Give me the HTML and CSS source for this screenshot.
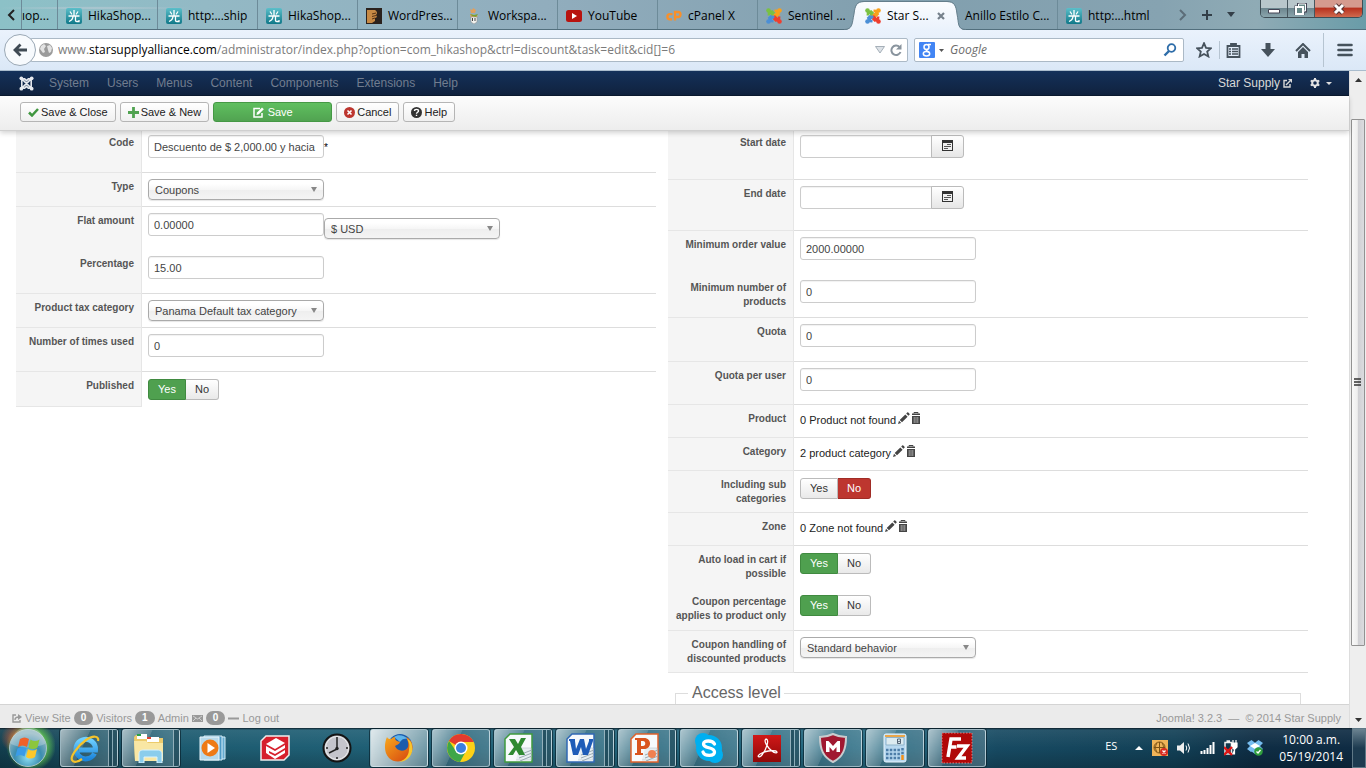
FILE: index.html
```html
<!DOCTYPE html>
<html lang="en">
<head>
<meta charset="utf-8">
<title>Star Supply - Discount</title>
<link rel="stylesheet" href="styles.css">
</head>
<body>
<svg class="defs" aria-hidden="true">
  <defs>
    <linearGradient id="teal" x1="0" y1="0" x2="0" y2="1"><stop offset="0" stop-color="#5cbfca"/><stop offset="1" stop-color="#0f7888"/></linearGradient>
    <linearGradient id="tabfill" x1="0" y1="0" x2="0" y2="1"><stop offset="0" stop-color="#fafcff"/><stop offset="1" stop-color="#eaf2fc"/></linearGradient>
    <radialGradient id="orb" cx=".5" cy=".75" r=".65"><stop offset="0" stop-color="#8fe0f4"/><stop offset=".55" stop-color="#3b8db0"/><stop offset="1" stop-color="#8eb4c0"/></radialGradient>
    <radialGradient id="glow"><stop offset=".5" stop-color="#6fe050" stop-opacity=".9"/><stop offset="1" stop-color="#6fe050" stop-opacity="0"/></radialGradient>
    <radialGradient id="glowr"><stop offset=".2" stop-color="#f06030" stop-opacity=".6"/><stop offset="1" stop-color="#f06030" stop-opacity="0"/></radialGradient>
    <linearGradient id="red" x1="0" y1="0" x2="0" y2="1"><stop offset="0" stop-color="#d01818"/><stop offset="1" stop-color="#900808"/></linearGradient>
    <linearGradient id="fox" x1="0" y1="0" x2="1" y2="1"><stop offset="0" stop-color="#f7a81c"/><stop offset="1" stop-color="#d4400f"/></linearGradient>
    <linearGradient id="ie" x1="0" y1="0" x2="0" y2="1"><stop offset="0" stop-color="#6fd0ff"/><stop offset="1" stop-color="#1c86dc"/></linearGradient>
  </defs>
  <symbol id="hika" viewBox="0 0 16 16"><rect width="16" height="16" rx="2" fill="url(#teal)"/><path d="M8 2v6M4 3.500l2 3M12 3.500l-2 3M2.500 8h11M7 8c0 3-1.500 4.500-4 5.500M9.500 8v4.500c0 .7.500 1 1.200 1h2.300v-1.500" fill="none" stroke="#fff" stroke-width="1.300"/></symbol>
  <symbol id="joomla" viewBox="0 0 16 16"><g fill="none" stroke-width="2.500"><path d="M2.800 7.500L3 5l3-1.500L8.500 6" stroke="#7ac143"/><path d="M8.500 2.800l2.500.2 1.700 3L10 8.500" stroke="#f9a01b"/><path d="M13.200 8.500L13 11l-3 1.500L7.500 10" stroke="#ef3e2e"/><path d="M7.500 13.200L5 13l-1.700-3L6 7.500" stroke="#4b8fd6"/><path d="M2.500 2.500L9 9" stroke="#7ac143"/><path d="M13.500 2.500L7 9" stroke="#f9a01b"/><path d="M13.500 13.500L8 8" stroke="#ef3e2e"/><path d="M2.500 13.500L8 8" stroke="#4b8fd6"/></g><circle cx="2.500" cy="2.500" r="2.300" fill="#7ac143"/><circle cx="13.500" cy="2.500" r="2.300" fill="#f9a01b"/><circle cx="13.500" cy="13.500" r="2.300" fill="#ef3e2e"/><circle cx="2.500" cy="13.500" r="2.300" fill="#4b8fd6"/></symbol>
  <symbol id="joomlaw" viewBox="0 0 16 16"><g fill="none" stroke="#e6e9ee" stroke-width="1.700"><path d="M3 3l10 10M13 3L3 13M3 8V5l2-2h1l2 2 2-2h1l2 2v6l-2 2h-1l-2-2-2 2H5l-2-2z"/></g><g fill="#e6e9ee"><circle cx="2.500" cy="2.500" r="2"/><circle cx="13.500" cy="2.500" r="2"/><circle cx="13.500" cy="13.500" r="2"/><circle cx="2.500" cy="13.500" r="2"/></g></symbol>
  <symbol id="pencil" viewBox="0 0 12 12"><path d="M0 12l1-3.200 2.200 2.200zM1.700 8L7.300 2.400l2.300 2.300L4 10.300zM8.200 1.600L9.500.3c.4-.4 2.600 1.700 2.200 2.200L10.400 3.800z" fill="#444"/></symbol>
  <symbol id="trash" viewBox="0 0 10 12"><path d="M3 1.500V.5h4v1" fill="none" stroke="#444"/><path d="M1 1.500h8V3H1zM1 4h8v8H1z" fill="#444"/><path d="M3.200 5v6M5 5v6M6.800 5v6" stroke="#bbb" stroke-width=".8"/></symbol>
  <symbol id="cal" viewBox="0 0 11 11"><path d="M0 0h11v11H0z" fill="#333"/><path d="M1 3h9v7H1z" fill="#f0f0f0"/><path d="M5 4.500h4M2 6.500h7M2 8.500h4" stroke="#555"/></symbol>
  <symbol id="sheet" viewBox="0 0 30 30"><path d="M6 1h22v28H1V6z" fill="#f7fafc" stroke="currentColor" stroke-width="1.500"/><path d="M15 15h12v12H12" fill="#e7eef2" stroke="#bcc8cc" stroke-width=".6"/><path d="M15 22l13-5M15 25l13-5M16 28l12-5" stroke="#9aabb3"/></symbol>
</svg>

<header class="tabs">
  <button class="tabs-prev" aria-label="Previous tabs"><svg width="8" height="12" viewBox="0 0 8 12"><path d="M7 1L2 6l5 5" fill="none" stroke="#222" stroke-width="2"/></svg></button>
  <a class="tab tab-cut" href="#">ıop...</a>
  <a class="tab" href="#"><svg class="fav"><use href="#hika"/></svg>HikaShop...</a>
  <a class="tab" href="#"><svg class="fav"><use href="#hika"/></svg>http:...ship</a>
  <a class="tab" href="#"><svg class="fav"><use href="#hika"/></svg>HikaShop...</a>
  <a class="tab" href="#"><svg class="fav" viewBox="0 0 16 16"><path d="M0 0h16v16H0z" fill="#2b221d"/><path d="M1 2h8c3 2 2 4 1 5l1 2-2 1v3l-3 2H1z" fill="#c78a45"/><path d="M6 6l4-1M6 8.500l4-1M6 11l3-1" stroke="#5b3414"/></svg>WordPres...</a>
  <a class="tab" href="#"><svg class="fav" viewBox="0 0 16 16"><path d="M4 1l2 1 1-2 3 2-1 3H5zM4 6l8 2-2 2H5z" fill="#e0a060"/><path d="M4 6l4 1 4-1-2 3-4-1z" fill="#7ba12a"/><path d="M5 9h6v5l-3 2-3-2z" fill="#f2f2ee" stroke="#888" stroke-width=".5"/><path d="M6.500 10v3M9 10v3" stroke="#444"/></svg>Workspa...</a>
  <a class="tab" href="#"><svg class="fav" viewBox="0 0 16 16"><rect y="2" width="16" height="12" rx="2.500" fill="#b8130f"/><path d="M6 5l5 3-5 3z" fill="#fff"/></svg>YouTube</a>
  <a class="tab" href="#"><svg class="fav" viewBox="0 0 16 16"><path d="M6.500 6.200H4a2.600 2.600 0 000 5.200h2M9 12.500V4h3a2.500 2.500 0 010 5H9" fill="none" stroke="#f8902a" stroke-width="2.300"/></svg>cPanel X</a>
  <a class="tab" href="#"><svg class="fav"><use href="#joomla"/></svg>Sentinel ...</a>
  <a class="tab tab-active" href="#"><svg class="tab-shape" viewBox="0 0 122 29"><path d="M0 29C9 29 8 22 10 13C11 4 13 1 20 1H103C110 1 112 4 113 13C115 22 113 29 122 29Z" fill="url(#tabfill)"/><path d="M0 28.500C9 28.500 8 22 10 13C11 4 13 .5 20 .5H103C110 .5 112 4 113 13C115 22 113 28.500 122 28.500" fill="none" stroke="#647e8c"/></svg><svg class="fav"><use href="#joomla"/></svg><span class="tab-name">Star S...</span><svg class="tab-x" width="8" height="8" viewBox="0 0 8 8"><path d="M1 1l6 6M7 1L1 7" stroke="#76818c" stroke-width="2.200"/></svg></a>
  <a class="tab tab-noicon" href="#">Anillo Estilo C...</a>
  <a class="tab tab-last" href="#"><svg class="fav"><use href="#hika"/></svg>http:...html</a>
  <div class="tab-tools">
    <button aria-label="Next tabs"><svg width="8" height="12" viewBox="0 0 8 12"><path d="M1 1l5 5-5 5" fill="none" stroke="#5c6d78" stroke-width="2"/></svg></button>
    <button aria-label="New tab"><svg width="10" height="10" viewBox="0 0 10 10"><path d="M5 0v10M0 5h10" stroke="#333f48" stroke-width="2"/></svg></button>
    <button aria-label="List tabs"><svg width="8" height="5" viewBox="0 0 8 5"><path d="M0 0h8L4 5z" fill="#333f48"/></svg></button>
  </div>
  <div class="win">
    <button aria-label="Minimize"><svg width="14" height="12" viewBox="0 0 14 12"><path d="M1.500 6.500h11v3.500h-11z" fill="#fff" stroke="#445"/></svg></button>
    <button aria-label="Restore"><svg width="14" height="12" viewBox="0 0 14 12"><path d="M4.500 1h7v7h-7zM2 4h7v7H2z" fill="none" stroke="#445" stroke-width="3"/><path d="M4.500 1h7v7h-7z" fill="#688" stroke="#fff"/><path d="M2 4h7v7H2z" fill="#688" stroke="#fff" stroke-width="2"/></svg></button>
    <button class="win-x" aria-label="Close"><svg width="14" height="12" viewBox="0 0 14 12"><path d="M3 2l8 8M11 2l-8 8" stroke="#533" stroke-width="5"/><path d="M3 2l8 8M11 2l-8 8" stroke="#fff" stroke-width="3"/></svg></button>
  </div>
</header>

<div class="urlrow">
  <button class="back" aria-label="Back"><svg width="14" height="14" viewBox="0 0 14 14"><path d="M14 7H3M7.500 1.500L2 7l5.500 5.500" fill="none" stroke="#3f4a54" stroke-width="2.800"/></svg></button>
  <div class="urlbar">
    <svg width="14" height="14" viewBox="0 0 14 14"><circle cx="7" cy="7" r="7" fill="#9b9b9b"/><path d="M2 3l3-2 2 2-2 3 1 3-2 1-3-4zM8 3l3-1 2 3-1 4-2 1-1-3z" fill="#e3e3e3"/></svg>
    <span class="url" role="textbox" contenteditable="true" spellcheck="false" aria-label="Address">www.<b>starsupplyalliance.com</b>/administrator/index.php?option=com_hikashop&amp;ctrl=discount&amp;task=edit&amp;cid[]=6</span>
    <svg width="10" height="8" viewBox="0 0 10 8"><path d="M.5.5h9L5 7z" fill="#dde2e7" stroke="#a5afb8"/></svg>
    <button class="plain" aria-label="Reload"><svg width="12" height="12" viewBox="0 0 12 12"><path d="M9.500 3A4.700 4.700 0 1010.500 8" fill="none" stroke="#89949e" stroke-width="2"/><path d="M11.500 0v5.500H6z" fill="#89949e"/></svg></button>
  </div>
  <div class="search">
    <svg width="16" height="16" viewBox="0 0 16 16"><rect width="16" height="16" rx="1" fill="#4285f4"/><g fill="none" stroke="#fff" stroke-width="1.500"><circle cx="7.500" cy="5" r="2.500"/><ellipse cx="7.500" cy="11.800" rx="3.200" ry="2.200"/><path d="M9 2.500h3M8 7.500c-2 1 1 1.500 2 3"/></g></svg>
    <svg width="5" height="3" viewBox="0 0 5 3"><path d="M0 0h5L2.500 3z" fill="#555"/></svg>
    <input aria-label="Search" placeholder="Google">
    <svg width="14" height="14" viewBox="0 0 14 14"><circle cx="8.500" cy="5" r="3.800" fill="none" stroke="#2e6da9" stroke-width="1.800"/><path d="M6 8l-4.500 4.500" stroke="#2e6da9" stroke-width="2.400"/></svg>
  </div>
  <div class="navicons">
    <button class="plain" aria-label="Bookmark"><svg width="16" height="16" viewBox="0 0 16 16"><path d="M8 1.200l2 4.600 5 .5-3.800 3.300 1.200 4.900L8 12l-4.400 2.500 1.200-4.900L1 6.300l5-.5z" fill="none" stroke="#46525c" stroke-width="1.800"/></svg></button>
    <i class="sep-s"></i>
    <button class="plain" aria-label="Bookmarks"><svg width="15" height="15" viewBox="0 0 15 15"><path d="M1.500 3h12v11h-12z" fill="none" stroke="#46525c" stroke-width="1.800"/><path d="M5 3V1h5v2" fill="none" stroke="#46525c" stroke-width="1.800"/><path d="M3 6h2M6 6h6M3 8.500h2M6 8.500h6M3 11h2M6 11h6" stroke="#46525c" stroke-width="1.300"/></svg></button>
    <button class="plain" aria-label="Downloads"><svg width="14" height="14" viewBox="0 0 14 14"><path d="M4.500 0h5v6H14l-7 8-7-8h4.500z" fill="#46525c"/></svg></button>
    <button class="plain" aria-label="Home"><svg width="16" height="15" viewBox="0 0 16 15"><path d="M1 8l7-7 7 7" fill="none" stroke="#46525c" stroke-width="2"/><path d="M3 9l5-5 5 5v6h-3.500v-4h-3v4H3z" fill="#46525c"/></svg></button>
    <i class="sep-l"></i>
    <button class="plain" aria-label="Menu"><svg width="16" height="14" viewBox="0 0 16 14"><path d="M1.500 2h13M1.500 7h13M1.500 12h13" stroke="#46525c" stroke-width="2.600" stroke-linecap="round"/></svg></button>
  </div>
</div>

<div class="viewport">
  <div class="page">
    <nav class="adminbar">
      <svg class="brand" width="15" height="15"><use href="#joomlaw"/></svg>
      <a href="#">System</a><a href="#">Users</a><a href="#">Menus</a><a href="#">Content</a><a href="#">Components</a><a href="#">Extensions</a><a href="#">Help</a>
      <a class="site" href="#">Star Supply <svg width="9" height="9" viewBox="0 0 9 9"><path d="M4 1.500H1V8h6V5M3 6l4-4" fill="none" stroke="#d9d9d9" stroke-width="1.400"/><path d="M5 0h4v4z" fill="#d9d9d9"/></svg></a>
      <button class="gear" aria-label="Settings"><svg width="10" height="10" viewBox="0 0 10 10"><circle cx="5" cy="5" r="2.800" fill="none" stroke="#e3e3e3" stroke-width="2"/><path d="M5 0v2M5 8v2M.7 2.500l1.700 1M7.600 6.500l1.700 1M9.300 2.500l-1.700 1M2.400 6.500l-1.700 1" stroke="#e3e3e3" stroke-width="2"/></svg><svg width="6" height="3" viewBox="0 0 6 3"><path d="M0 0h6L3 3z" fill="#ddd"/></svg></button>
    </nav>
    <div class="toolbar">
      <button class="btn"><svg width="11" height="9" viewBox="0 0 11 9"><path d="M1 4.500l3 3L10 1" fill="none" stroke="#409740" stroke-width="2.500"/></svg>Save &amp; Close</button>
      <button class="btn"><svg width="11" height="11" viewBox="0 0 11 11"><path d="M5.500 0v11M0 5.500h11" stroke="#51a351" stroke-width="2.800"/></svg>Save &amp; New</button>
      <button class="btn btn-save"><svg width="11" height="11" viewBox="0 0 11 11"><path d="M7 1.500H1V10h8V6" fill="none" stroke="#fff" stroke-width="1.500"/><path d="M3.500 8l.5-2.500L9 .5l1.800 1.800-5 5z" fill="#fff"/></svg>Save</button>
      <button class="btn"><svg width="11" height="11" viewBox="0 0 11 11"><circle cx="5.500" cy="5.500" r="5.500" fill="#bd362f"/><path d="M3.500 3.500l4 4M7.500 3.500l-4 4" stroke="#fff" stroke-width="1.600"/></svg>Cancel</button>
      <button class="btn"><svg width="11" height="11" viewBox="0 0 11 11"><circle cx="5.500" cy="5.500" r="5.500" fill="#333"/><path d="M3.500 4c0-2.200 4-2.200 4 0 0 1.300-2 1.200-2 2.700M5.500 7.700v1.300" fill="none" stroke="#fff" stroke-width="1.400"/></svg>Help</button>
    </div>
    <main class="content">
      <form class="col">
        <div class="row row-input"><label for="code">Code</label><div class="ctl"><input class="field" id="code" value="Descuento de $ 2,000.00 y hacia arriba"><span class="req">*</span></div></div>
        <div class="row row-select"><label for="type">Type</label><div class="ctl"><span class="pick"><select id="type"><option>Coupons</option></select></span></div></div>
        <div class="row row-short open"><label for="flat">Flat amount</label><div class="ctl"><input class="field" id="flat" value="0.00000"><span class="pick pick-low"><select aria-label="Currency"><option>$ USD</option></select></span></div></div>
        <div class="row row-input"><label for="perc">Percentage</label><div class="ctl"><input class="field" id="perc" value="15.00"></div></div>
        <div class="row row-select"><label for="tax">Product tax category</label><div class="ctl"><span class="pick"><select id="tax"><option>Panama Default tax category</option></select></span></div></div>
        <div class="row row-input"><label for="used">Number of times used</label><div class="ctl"><input class="field" id="used" value="0"></div></div>
        <div class="row row-last"><span class="label" id="pub">Published</span><div class="ctl toggle" role="radiogroup" aria-labelledby="pub"><input type="radio" name="pub" id="pub1" checked><label for="pub1">Yes</label><input type="radio" name="pub" id="pub0"><label for="pub0" class="neg">No</label></div></div>
      </form>
      <form class="col">
        <div class="row row-date"><label for="start">Start date</label><div class="ctl"><input class="field date" id="start"><button type="button" class="calbtn" aria-label="Pick start date"><svg width="11" height="11"><use href="#cal"/></svg></button></div></div>
        <div class="row row-date"><label for="end">End date</label><div class="ctl"><input class="field date" id="end"><button type="button" class="calbtn" aria-label="Pick end date"><svg width="11" height="11"><use href="#cal"/></svg></button></div></div>
        <div class="row row-short open"><label for="minv">Minimum order value</label><div class="ctl"><input class="field" id="minv" value="2000.00000"></div></div>
        <div class="row row-input"><label for="minn">Minimum number of products</label><div class="ctl"><input class="field" id="minn" value="0"></div></div>
        <div class="row row-input"><label for="quota">Quota</label><div class="ctl"><input class="field" id="quota" value="0"></div></div>
        <div class="row row-short"><label for="quotau">Quota per user</label><div class="ctl"><input class="field" id="quotau" value="0"></div></div>
        <div class="row row-text"><span class="label">Product</span><div class="ctl text">0 Product not found<a href="#" aria-label="Edit"><svg width="12" height="12"><use href="#pencil"/></svg></a><a href="#" aria-label="Delete"><svg width="10" height="12"><use href="#trash"/></svg></a></div></div>
        <div class="row row-text"><span class="label">Category</span><div class="ctl text">2 product category<a href="#" aria-label="Edit"><svg width="12" height="12"><use href="#pencil"/></svg></a><a href="#" aria-label="Delete"><svg width="10" height="12"><use href="#trash"/></svg></a></div></div>
        <div class="row row-two"><span class="label" id="sub">Including sub categories</span><div class="ctl toggle" role="radiogroup" aria-labelledby="sub"><input type="radio" name="sub" id="sub1"><label for="sub1">Yes</label><input type="radio" name="sub" id="sub0" checked><label for="sub0" class="neg">No</label></div></div>
        <div class="row row-text"><span class="label">Zone</span><div class="ctl text">0 Zone not found<a href="#" aria-label="Edit"><svg width="12" height="12"><use href="#pencil"/></svg></a><a href="#" aria-label="Delete"><svg width="10" height="12"><use href="#trash"/></svg></a></div></div>
        <div class="row row-two open"><span class="label" id="auto">Auto load in cart if possible</span><div class="ctl toggle" role="radiogroup" aria-labelledby="auto"><input type="radio" name="auto" id="auto1" checked><label for="auto1">Yes</label><input type="radio" name="auto" id="auto0"><label for="auto0" class="neg">No</label></div></div>
        <div class="row row-short"><span class="label" id="cp">Coupon percentage applies to product only</span><div class="ctl toggle" role="radiogroup" aria-labelledby="cp"><input type="radio" name="cp" id="cp1" checked><label for="cp1">Yes</label><input type="radio" name="cp" id="cp0"><label for="cp0" class="neg">No</label></div></div>
        <div class="row row-two"><label for="handling">Coupon handling of discounted products</label><div class="ctl"><span class="pick"><select id="handling"><option>Standard behavior</option></select></span></div></div>
        <fieldset><legend>Access level</legend></fieldset>
      </form>
    </main>
    <footer class="status">
      <svg width="10" height="9" viewBox="0 0 10 9"><path d="M4 1H1v7h7V6M3 6c0-2 1-3 4-3" fill="none" stroke="#999" stroke-width="1.400"/><path d="M6 0l4 3-4 3z" fill="#999"/></svg><a href="#">View Site</a>
      <span class="badge">0</span><span>Visitors</span><span class="badge">1</span><span>Admin</span>
      <svg width="11" height="7" viewBox="0 0 11 7"><path d="M0 0h11v7H0z" fill="#999"/><path d="M1 1l4.500 3L10 1M1 6l3-3M10 6L7 3" fill="none" stroke="#ddd" stroke-width=".8"/></svg><span class="badge">0</span>
      <svg width="11" height="3" viewBox="0 0 11 3"><path d="M0 .5h11v2H0z" fill="#999"/></svg><a href="#">Log out</a>
      <span class="copy">Joomla! 3.2.3 &nbsp;—&nbsp; © 2014 Star Supply</span>
    </footer>
  </div>
  <div class="scroll">
    <button class="plain" aria-label="Scroll up"><svg width="7" height="4" viewBox="0 0 7 4"><path d="M0 4h7L3.500 0z" fill="#333"/></svg></button>
    <div class="track"><div class="thumb"><svg width="8" height="9" viewBox="0 0 8 9"><path d="M0 1h7M0 4h7M0 7h7" stroke="#333" stroke-width="1.500"/></svg></div></div>
    <button class="plain" aria-label="Scroll down"><svg width="7" height="4" viewBox="0 0 7 4"><path d="M0 0h7L3.500 4z" fill="#333"/></svg></button>
  </div>
</div>

<footer class="taskbar">
  <button class="start" aria-label="Start"><svg width="54" height="40" viewBox="0 0 54 40"><circle cx="30" cy="18" r="25" fill="url(#glow)"/><circle cx="15" cy="10" r="15" fill="url(#glowr)"/><circle cx="27" cy="20" r="18.500" fill="url(#orb)" stroke="#a9c6c8"/><path d="M10 16a17 17 0 0134 0c-10 4-24 5-34 0z" fill="#fff" opacity=".25"/><path d="M19 11c3-2 6-2 9 0l-2 8c-3-2-6-2-9 0z" fill="#f0602a"/><path d="M29.500 11.500c3 2 6 2 9 0l-2 8c-3 2-6 2-9 0z" fill="#8cc63e"/><path d="M16.500 20.500c3-2 6-2 9 0l-2 8c-3-2-6-2-9 0z" fill="#3a9be8"/><path d="M27 21c3 2 6 2 9 0l-2 8c-3 2-6 2-9 0z" fill="#fdc829"/></svg></button>
  <button class="task open stack" aria-label="Internet Explorer"><svg width="30" height="30" viewBox="0 0 30 30"><path d="M24.500 20.500A9.800 9.800 0 1125.500 17H9" fill="none" stroke="url(#ie)" stroke-width="5"/><path d="M28 8c1.500-5-5-6-12-1S0 23 2 27c1.500 3 6 2 10-1" fill="none" stroke="#f5c32b" stroke-width="2.200"/></svg></button>
  <button class="task open stack1" aria-label="Explorer"><svg width="32" height="30" viewBox="0 0 32 30"><path d="M1 4l2-2h10l2 3h15v23H2z" fill="#eccb6c"/><path d="M4 1h10v5H4zM14 4h12v5H14z" fill="#fff"/><path d="M4 1h4v2H4z" fill="#28a045"/><path d="M14 4h4v2h-4z" fill="#db4333"/><path d="M1 8h12l2 2h15v18H2z" fill="#f9e7a4"/><path d="M6 30v-9c0-4 3-4 5-4h13c4 0 5 2 5 4v9h-5v-6H11v6z" fill="#8bcdec" stroke="#d9f3ff"/></svg></button>
  <button class="task" aria-label="Media Player"><svg width="28" height="28" viewBox="0 0 28 28"><path d="M8 3h18v22H8z" fill="#67abcf" stroke="#d2ecf8"/><path d="M5 2h18v24H5z" fill="#4c99c5" stroke="#d2ecf8"/><path d="M1 3h19v23H1z" fill="#b6d9eb" stroke="#e8f6fc"/><circle cx="11" cy="14" r="8.500" fill="#ee7a15"/><path d="M8.500 9v10l7.500-5z" fill="#fff"/></svg></button>
  <button class="task" aria-label="SketchUp"><svg width="32" height="28" viewBox="0 0 32 28"><path d="M7 2h23v19l-5 5H2V7z" fill="#d6202c" stroke="#eee" stroke-width="1.500"/><path d="M7 10l10-6 9 5-10 6z" fill="#fff"/><path d="M7 12l9 5 10-6v3l-10 6-6-3v2l6 3 10-6v3l-10 6-9-6z" fill="#fff"/></svg></button>
  <button class="task" aria-label="Clock"><svg width="30" height="30" viewBox="0 0 30 30"><circle cx="15" cy="15" r="13.500" fill="#c5c5cc" stroke="#141414" stroke-width="2"/><circle cx="15" cy="15" r="11.500" fill="none" stroke="#eee"/><path d="M15 4v12L7 20M4 15h2M24 15h2M15 24v2" fill="none" stroke="#222" stroke-width="1.500"/><circle cx="15" cy="15.500" r="1.700" fill="#222"/></svg></button>
  <button class="task open active" aria-label="Firefox"><svg width="30" height="30" viewBox="0 0 30 30"><circle cx="16" cy="13" r="12" fill="#1d5cac"/><path d="M10 4c4-3 10-2 14 2-4-1-6 0-8 3z" fill="#5fb4ea"/><path d="M3 4c1 2 2 2 4 2 2-2 4-2 4-2 0 3 1 4 5 5-1 3-4 3-5 4 2 6 11 6 13 1 1-5-1-8-2-10 5 2 8 8 6 14-3 10-16 14-23 7C0 20 0 11 3 4z" fill="url(#fox)"/><path d="M28 13c2 7-4 16-13 16 8-3 10-8 10-13 1-5 0-7-2-10 3 1 5 4 5 7z" fill="#f9c62b"/></svg></button>
  <button class="task open" aria-label="Chrome"><svg width="30" height="30" viewBox="0 0 30 30"><circle cx="15" cy="15" r="14" fill="#fcd116"/><path d="M15 15L2.900 8A14 14 0 0127.700 9H15z" fill="#e33b2e"/><path d="M3 8a14 14 0 0011 21l6-11-10 0z" fill="#3fa648"/><circle cx="15" cy="15" r="6.500" fill="#fff"/><circle cx="15" cy="15" r="5" fill="#3b7fe0"/></svg></button>
  <button class="task open stack" aria-label="Excel"><svg class="xl" width="30" height="30"><use href="#sheet"/><path d="M5 6h6l3 5 3-6h5l-5 9 4 8h-6l-3-5-3 5H4l6-8z" fill="#2f8a32"/></svg></button>
  <button class="task open stack" aria-label="Word"><svg class="wd" width="30" height="30"><use href="#sheet"/><path d="M3 6h6v2l1 8 4-10h4l2 10 3-8V6h4v2l-5 14h-5l-2-8-3 8H7L4 8H3z" fill="#1e5cb8"/></svg></button>
  <button class="task open stack1" aria-label="PowerPoint"><svg class="pp" width="30" height="30"><use href="#sheet"/><path d="M5 5h9c8 0 8 11 0 11h-3v4h2v2H5v-2h2V7H5zM11 8v5h2c3 0 3-5 0-5z" fill="#d9541e" fill-rule="evenodd"/><circle cx="22" cy="21" r="4" fill="#f08050"/></svg></button>
  <button class="task open" aria-label="Skype"><svg width="30" height="30" viewBox="0 0 30 30"><circle cx="9" cy="8" r="8" fill="#00aff0"/><circle cx="21" cy="22" r="8" fill="#00aff0"/><circle cx="15" cy="15" r="13" fill="#00aff0"/><path d="M20.500 11c-2-4-11-4-11 0 0 5 11 2.500 11 8 0 4.500-10 4.500-11.500 0" fill="none" stroke="#fff" stroke-width="3.300" stroke-linecap="round"/></svg></button>
  <button class="task open stack" aria-label="Adobe Reader"><svg width="28" height="28" viewBox="0 0 28 28"><path d="M0 1h28v27H0z" fill="url(#red)"/><path d="M13 5c4 0 0 12-5 17-3 2-4 0-1-2 5-3 12-4 16-3 3 2-1 3-4 0-4-3-9-10-6-12z" fill="none" stroke="#fff" stroke-width="1.300"/></svg></button>
  <button class="task open" aria-label="McAfee"><svg width="28" height="30" viewBox="0 0 28 30"><path d="M1 4c5 0 9-1 13-3 4 2 8 3 13 3 0 12-3 20-13 25C4 24 1 16 1 4z" fill="#a01830" stroke="#c9ccce" stroke-width="2"/><path d="M7 19V8h2.500L14 13l4.500-5H21v11h-3.500v-5L14 18l-3.500-4v5z" fill="#fff"/></svg></button>
  <button class="task open" aria-label="Calculator"><svg width="24" height="30" viewBox="0 0 24 30"><rect x="1" y="1" width="22" height="28" rx="2" fill="#b7d8ef" stroke="#e7f4fc"/><path d="M2 2h20v2H2z" fill="#e9a64a"/><path d="M3 4.500h18V12H3z" fill="#dcebf0" stroke="#8fb4cc"/><path d="M14.500 6h3v4.500h-3zM14.500 9l3-1" fill="none" stroke="#567"/><path d="M3 17h14M3 21h14M3 25h14" stroke="#4c7da8" stroke-width="2.500" stroke-dasharray="2.500 1.300"/><path d="M19.500 15v7" stroke="#4c7da8" stroke-width="2.500" stroke-dasharray="2.500 1.300"/><path d="M19.500 22v5" stroke="#f29018" stroke-width="2.500"/></svg></button>
  <button class="task open" aria-label="FileZilla"><svg width="32" height="32" viewBox="0 0 32 32"><path d="M1 1h30v30H1z" fill="#b00808" stroke="#e08080" stroke-dasharray="1.500 1.500"/><path d="M7 25L10 7h10M8.500 15h7M16 14h10l-9 12h8" fill="none" stroke="#fff" stroke-width="3.500"/></svg></button>
  <div class="tray">
    <span class="lang">ES</span>
    <svg width="8" height="4" viewBox="0 0 8 4"><path d="M0 4h8L4 0z" fill="#fff"/></svg>
    <svg width="16" height="16" viewBox="0 0 16 16"><path d="M0 0h16v16H0z" fill="#efb458"/><circle cx="7.500" cy="7.500" r="5.500" fill="none" stroke="#7b5214"/><path d="M2 7.500h11M7.500 2v11M5 3c-2 3-2 6 0 9M10 3c2 3 2 6 0 9" fill="none" stroke="#7b5214"/><circle cx="12" cy="12" r="4" fill="#d92b22"/><path d="M10.500 10.500l3 3M13.500 10.500l-3 3" stroke="#fff" stroke-width="1.300"/></svg>
    <svg width="14" height="14" viewBox="0 0 14 14"><path d="M0 4.500h3L7 1v12L3 9.500H0z" fill="#eee"/><path d="M9 4.500q1.500 2.500 0 5M11 2.500q3 4.500 0 9" fill="none" stroke="#fff"/></svg>
    <svg width="15" height="12" viewBox="0 0 15 12"><path d="M1.500 9v3M4.500 8v4M7.500 6v6M10.500 3v9M13.500 0v12" stroke="#fff" stroke-width="2"/></svg>
    <svg width="14" height="16" viewBox="0 0 14 16"><path d="M1 2.500h6.500V14H1zM2.500 1h3.500" fill="none" stroke="#eee" stroke-width="1.500"/><path d="M8 3h5v4l-2 2H9.500L8 7zM9 0v3M12 0v3M10.500 9v5H8" fill="#fff" stroke="#fff" stroke-width="1.200"/><path d="M0 7l8 8M8 7l-8 8" stroke="#e01616" stroke-width="2.400"/></svg>
    <svg width="16" height="16" viewBox="0 0 16 16"><path d="M4.500 0L8 2.800 11.500 0 16 3l-3 3 3 3-4 3-4-3-4 3-4-3 3-3-3-3z" fill="#76bdf0"/><path d="M3 6l5-3 5 3-5 3z" fill="#fff"/><path d="M4 11l4-2v5z" fill="#76bdf0"/><circle cx="11.500" cy="11.500" r="4.300" fill="#2f9e3d"/><path d="M9.500 11.500l1.500 1.500 2.500-3" fill="none" stroke="#fff" stroke-width="1.300"/></svg>
    <div class="clock"><span>10:00 a.m.</span><span>05/19/2014</span></div>
  </div>
  <button class="showdesk" aria-label="Show desktop"></button>
</footer>
</body>
</html>
```
FILE: styles.css
```css
* { box-sizing: border-box; }
body { margin: 0; height: 100vh; display: flex; flex-direction: column; overflow: hidden; font-family: "Liberation Sans", Arial, sans-serif; font-size: 11px; line-height: 14px; color: #222; background: #fff; }
button, input, select { font: inherit; color: inherit; margin: 0; }
a { color: inherit; text-decoration: none; }
svg { flex: none; display: block; }
.defs { position: absolute; width: 0; height: 0; }
.plain { border: 0; background: none; padding: 0; display: grid; place-items: center; }

/* browser tabs */
.tabs { height: 30px; flex: none; display: flex; background: radial-gradient(ellipse at 95px 8px, rgba(195, 205, 215, .7), transparent 100px), linear-gradient(90deg, #8cc1c7 0, #93b9c5 15%, #91adbd 40%, #819fae 65%, #86a3b1 85%, #8fabb5 92%, #699ca8 100%); border-bottom: 1px solid #526f7d; font-family: "Open Sans", "Noto Sans", sans-serif; font-size: 12px; color: #000; }
.tabs button { border: 0; background: none; padding: 0; display: grid; place-items: center; }
.tabs-prev { width: 21px; flex: none; }
.tab { width: 100px; flex: none; display: flex; align-items: center; gap: 6px; padding: 2px 0 0 8px; border-left: 1px solid #6d8b99; white-space: nowrap; position: relative; }
.tab-cut { width: 36px; padding-left: 0; }
.tab-active, .tab-noicon { border-left: 0; }
.tab-active { z-index: 1; }
.fav { width: 16px; height: 16px; position: relative; }
.tab-shape { position: absolute; left: -13px; top: 1px; width: 122px; height: 29px; }
.tab-name { position: relative; flex: 1; }
.tab-x { position: relative; margin-right: 12px; }
.tab-tools { display: flex; gap: 15px; margin-left: 22px; flex: 1; }
.win { display: flex; height: 18px; margin-right: 3px; border: 1px solid #3e4d55; border-top: 0; border-radius: 0 0 5px 5px; overflow: hidden; }
.win button { width: 27px; background: linear-gradient(#b8c6cb 0 45%, #6d868f 50%, #8aa5ac); border-right: 1px solid #46565e; }
.win .win-x { width: 47px; border: 0; background: linear-gradient(#d59a8e 0 40%, #b83320 50%, #cf6a4e); }

/* address row */
.urlrow { height: 41px; flex: none; display: flex; align-items: center; padding-left: 4px; background: linear-gradient(#eaf2fc, #dbe8f7); border-bottom: 1px solid #a9bccd; font-family: "Open Sans", "Noto Sans", sans-serif; font-size: 12px; }
.back { width: 32px; height: 32px; flex: none; border: 1px solid #9aa8b5; border-radius: 50%; background: #f7fafd; padding: 0; display: grid; place-items: center; z-index: 1; }
.urlbar, .search { height: 24px; display: flex; align-items: center; background: #fff; border: 1px solid #abb9c6; border-radius: 2px; }
.urlbar { flex: 1; margin-left: -6px; padding: 0 5px 0 8px; gap: 5px; min-width: 0; }
.url { flex: 1; color: #7b7b7b; white-space: nowrap; overflow: hidden; outline: 0; line-height: 20px; }
.url b { font-weight: 400; color: #000; }
.search { width: 270px; margin-left: 6px; padding: 0 6px 0 4px; gap: 4px; }
.search input { flex: 1; min-width: 0; border: 0; padding: 0 2px; background: none; outline: 0; font-style: italic; }
.search input::placeholder { color: #6c6c6c; }
.navicons { display: flex; align-items: center; height: 100%; padding: 0 13px 0 12px; }
.navicons .plain + .plain { margin-left: 20px; }
.sep-s { width: 1px; height: 18px; background: #b6c4d1; margin: 0 6px 0 7px; }
.sep-l { width: 1px; height: 34px; background: #b6c4d1; margin: 0 13px 0 12px; }

/* page frame */
.viewport { flex: 1; min-height: 0; display: flex; }
.page { flex: 1; min-width: 0; display: flex; flex-direction: column; }
.adminbar { height: 25px; flex: none; display: flex; align-items: center; gap: 18px; padding: 0 17px 0 19px; background: linear-gradient(#14315a, #10223e); border-bottom: 1px solid #0b1a30; font-size: 12px; color: #717d8f; }
.adminbar .brand { margin-right: -3px; }
.adminbar .site { margin-left: auto; color: #d9d9d9; display: flex; align-items: center; gap: 3px; }
.gear { border: 0; background: none; padding: 0; display: flex; align-items: center; gap: 6px; }
.toolbar { height: 35px; flex: none; display: flex; align-items: center; gap: 4px; padding: 0 20px 2px; background: linear-gradient(#fcfcfc, #ededed); border-bottom: 1px solid #cfcfcf; box-shadow: 0 2px 5px rgba(0, 0, 0, .18); z-index: 1; }
.btn { height: 20px; padding: 0 7px; display: flex; align-items: center; justify-content: center; gap: 2px; border: 1px solid #b5b5b5; border-radius: 3px; background: linear-gradient(#fff, #f0f0f0); color: #222; white-space: nowrap; }
.btn-save { width: 119px; gap: 4px; color: #fff; border-color: #459845; background: linear-gradient(#5fbf5f, #51a351); }

/* form */
.content { flex: 1; min-height: 0; overflow: hidden; display: grid; grid-template-columns: 1fr 1fr; align-items: start; gap: 12px; padding: 0 41px 0 16px; }
.col { margin-top: -2px; min-width: 0; }
.row { display: flex; }
.row > label, .row > .label { width: 126px; flex: none; padding: 7px 7px 6px 4px; text-align: right; font-size: 10px; font-weight: 700; color: #555; background: #f5f5f5; border-right: 1px solid #e6e6e6; border-bottom: 1px solid #e6e6e6; }
.ctl { flex: 1; min-width: 0; display: flex; align-items: flex-start; padding: 6px 0 0 6px; border-bottom: 1px solid #ddd; }
.row.open > *, .row-last > .ctl { border-bottom: 0; }
.row-input { min-height: 44px; }
.row-short { min-height: 43px; }
.row-select { min-height: 34px; }
.row-last { min-height: 35px; }
.row-date { min-height: 51px; }
.row-text { min-height: 33px; }
.row-two { min-height: 42px; }
.field { width: 176px; height: 23px; padding: 0 5px; border: 1px solid #ccc; border-radius: 3px; background: #fff; box-shadow: inset 0 1px 1px rgba(0, 0, 0, .06); color: #444; }
.date { width: 132px; border-radius: 3px 0 0 3px; }
.calbtn { width: 33px; height: 23px; margin-left: -1px; padding: 0 0 3px; border: 1px solid #bbb; border-radius: 0 3px 3px 0; background: linear-gradient(#fff, #e6e6e6); display: grid; place-items: center; }
.req { line-height: 26px; font-size: 10px; color: #000; }
.pick { position: relative; width: 176px; }
.pick-low { margin-top: 5px; }
.pick select { width: 100%; height: 21px; padding: 0 6px; border: 1px solid #aaa; border-radius: 4px; appearance: none; background: linear-gradient(#fff 20%, #f6f6f6 50%, #eee 52%, #f4f4f4 100%); box-shadow: 0 1px 1px rgba(0, 0, 0, .1); color: #444; display: block; }
.pick::after { content: ""; position: absolute; right: 7px; top: 8px; border: 3px solid transparent; border-top: 5px solid #888; border-bottom: 0; pointer-events: none; }
.toggle { padding-top: 7px; }
.toggle input { position: absolute; opacity: 0; }
.toggle label { height: 21px; padding: 0 9px; line-height: 19px; border: 1px solid #bbb; border-radius: 3px 0 0 3px; background: linear-gradient(#fff, #e9e9e9); color: #333; }
.toggle label.neg { border-radius: 0 3px 3px 0; border-left: 0; }
.toggle input:checked + label { background: #4fa04f; border-color: #408a40; color: #fff; }
.toggle input:checked + label.neg { background: #bd362f; border-color: #a02c26; }
.text { padding-top: 7px; line-height: 16px; }
.text a { margin-left: 1px; }
.text a:first-of-type { margin-left: 2px; }
fieldset { margin: 10px 7px 0; padding: 0 12px; border: 1px solid #ddd; min-height: 80px; }
legend { padding: 0 3px 0 4px; font-size: 16px; line-height: 20px; color: #666; }

/* status bar */
.status { height: 24px; flex: none; display: flex; align-items: center; gap: 3px; padding: 3px 8px 0 12px; background: #ebebeb; border-top: 1px solid #d4d4d4; color: #999; }
.badge { padding: 0 7px; height: 14px; border-radius: 8px; background: #999; color: #fff; font-size: 10px; font-weight: 700; }
.copy { margin-left: auto; }

/* scrollbar */
.scroll { width: 17px; display: flex; flex-direction: column; background: #eee; border-left: 1px solid #ddd; }
.scroll > button { height: 17px; }
.track { flex: 1; padding: 31px 1px 65px; display: flex; }
.thumb { flex: 1; border: 1px solid #929292; border-radius: 1px; background: linear-gradient(90deg, #f8f8f8, #eee 45%, #cfcfd3 50%, #dcdcdf); display: grid; place-items: center; }

/* taskbar */
.taskbar { height: 40px; flex: none; display: flex; gap: 4px; background: linear-gradient(rgba(10, 25, 35, .9), rgba(255, 255, 255, .08) 2px, transparent 50%, rgba(0, 0, 0, .2)), linear-gradient(90deg, #123e4e 0, #1d5b70 12%, #246880 65%, #174a62 73%, #124056 86%, #0e2d44 92%, #0e2b43); }
.taskbar button { border: 0; background: none; padding: 0; display: grid; place-items: center; }
.start { width: 56px; }
.task { width: 58px; flex: none; position: relative; }
.taskbar .task.open { border: 1px solid rgba(205, 225, 232, .65); border-radius: 3px; margin-top: 1px; height: 38px; background: linear-gradient(115deg, rgba(255, 255, 255, .6), rgba(255, 255, 255, .22) 40%, rgba(255, 255, 255, .1) 41%, rgba(255, 255, 255, .2)); box-shadow: 0 0 0 1px rgba(5, 25, 35, .6); }
.taskbar .task.active { background: linear-gradient(115deg, rgba(255, 255, 255, .85), rgba(255, 255, 255, .6) 45%, rgba(255, 255, 255, .3)); }
.taskbar .stack { padding-right: 8px; }
.taskbar .stack1 { padding-right: 5px; }
.stack::after, .stack1::after { content: ""; position: absolute; top: 0; bottom: 0; right: 0; width: 8px; border-left: 1px solid rgba(205, 225, 232, .65); background: linear-gradient(90deg, rgba(10, 50, 65, .6) 0 3px, rgba(205, 225, 232, .5) 3px 4px, rgba(10, 50, 65, .5) 4px 100%); }
.stack1::after { width: 5px; background: rgba(10, 50, 65, .5); }
.xl { color: #3f9a3e; }
.wd { color: #3068b4; }
.pp { color: #e0622b; }
.tray { margin-left: auto; display: flex; align-items: center; gap: 9px; font-family: "Open Sans", "Noto Sans", sans-serif; font-size: 12px; color: #fff; }
.lang { font-size: 11px; margin: -5px 9px 0 0; }
.clock { display: flex; flex-direction: column; align-items: center; line-height: 17px; margin: 0 5px 0 7px; }
.taskbar .showdesk { width: 14px; border: 1px solid #5f7886; background: linear-gradient(#6c8391, #1d3b50 50%); }
```
